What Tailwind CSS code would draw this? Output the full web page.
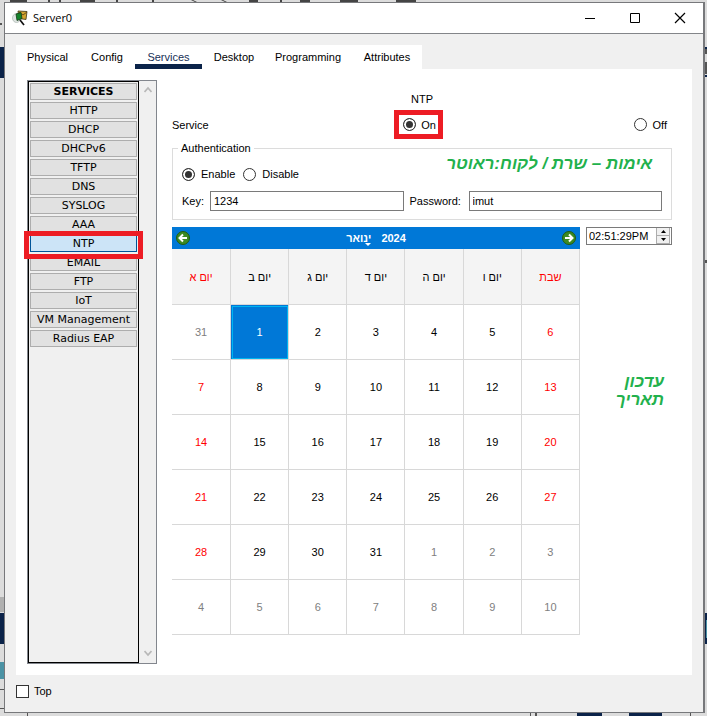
<!DOCTYPE html>
<html lang="en">
  <head>
    <meta charset="UTF-8" />
    <meta name="viewport" content="width=device-width, initial-scale=1.0" />
    <title>Server0</title>
    <script src="https://cdn.jsdelivr.net/npm/@tailwindcss/browser@4"></script>
  </head>
  <body class="relative h-screen overflow-hidden bg-[#dcdcdc] pt-0.5 pr-0.5 pb-[3px] pl-1 font-['Liberation_Sans',Arial,sans-serif] text-[11px] leading-4 text-black">
    <!-- what shows of the desktop round the window -->
    <svg class="absolute inset-0 size-full" aria-hidden="true">
      <path fill="#444" d="M10 0h17v2H10zM48 0h2v2h-2zM59 0h2v2h-2zM80 0h15v2H80zM116 0h2v2h-2zM152 0h2v2h-2zM191 0l4 2h2l-4-2zM221 0l4 2h2l-4-2zM249 0h9v2h-9zM280 0h2v2h-2zM300 0h10v2h-10zM340 0h18v2h-18zM396 0h20v2h-20z" />
      <path fill="#0b2349" d="M0 47h4v31H0zM0 613h4v31H0zM705 47h2v2h-2zM705 75h2v2h-2zM705 613h2v31h-2zM577 713h25v3h-25zM629 713h33v3h-33z" />
      <path fill="#555" d="M0 23h2v2H0zM705 49h2v5h-2zM705 62h2v12h-2zM705 260h2v3h-2zM0 689h4v1H0zM0 708h4v1H0zM27 713h1v3h-1zM530 713h1v3h-1zM535 713h2v3h-2zM690 713h1v3h-1z" />
      <path fill="#b0b0b0" d="M0 597h4v15H0z" />
      <path fill="#4b93a5" d="M0 662h4v17H0zM706 620h1v18h-1z" />
    </svg>

    <div class="relative flex h-full flex-col border border-r-2 border-[#77787b] bg-[#f0f0f0]">
      <header class="flex h-[31px] shrink-0 items-center border-b border-[#838589] bg-white pl-[7px]">
        <svg class="size-4" viewBox="0 0 16 16" aria-hidden="true">
          <ellipse cx="4.500" cy="8" rx="4" ry="4.500" fill="#dfe5e2" stroke="#aab5b0" stroke-width=".7" />
          <path fill="#d2a32f" stroke="#3b3316" stroke-width=".8" d="M6 1l9 .5-1 8-7-1z" />
          <path fill="none" stroke="#6b511a" d="M7 2l4 3 4-3" />
          <path fill="#14832a" stroke="#153a18" stroke-width=".8" d="M4 4l5-1.500 1 6-5 2z" />
          <path stroke="#111" stroke-width="1.700" d="M8 10l4 5" />
        </svg>
        <h1 class="ml-[5px] font-['Open_Sans',sans-serif]">Server0</h1>
        <div class="ml-auto flex h-full">
          <button class="grid w-[46px] place-items-center" aria-label="Minimize">
            <svg class="size-3" viewBox="0 0 12 12"><path stroke="#000" d="M1 6.500h10" /></svg>
          </button>
          <button class="grid w-[44px] place-items-center" aria-label="Maximize">
            <svg class="size-3" viewBox="0 0 12 12"><path fill="none" stroke="#000" d="M1.500 1.500h9v9h-9z" /></svg>
          </button>
          <button class="grid w-[46px] place-items-center" aria-label="Close">
            <svg class="size-3" viewBox="0 0 12 12"><path stroke="#000" stroke-width="1.200" d="M1 1l10 10M11 1L1 11" /></svg>
          </button>
        </div>
      </header>

      <div class="flex min-h-0 flex-1 flex-col px-[11px] pt-[11px]">
        <nav class="flex h-6 w-fit gap-[2px] bg-white">
          <a href="#" class="w-[63px] pt-1 text-center">Physical</a>
          <a href="#" class="w-[52px] pt-1 text-center">Config</a>
          <a href="#" class="w-[67px] border-b-5 border-[#0b2349] pt-1 text-center text-[#173057]">Services</a>
          <a href="#" class="w-[60px] pt-1 text-center">Desktop</a>
          <a href="#" class="w-[84px] pt-1 text-center">Programming</a>
          <a href="#" class="w-[70px] pt-1 text-center">Attributes</a>
        </nav>

        <main class="flex min-h-0 flex-1 gap-[15px] bg-white pt-[11px] pr-5 pb-[11px] pl-[11px]">
          <aside class="flex w-[130px] shrink-0 border border-[#82868d] bg-[#f0f0f0]">
            <div class="relative flex flex-1 flex-col gap-0.5 border border-black p-px font-['DejaVu_Sans',Verdana,sans-serif] [&>button]:h-[17px] [&>button]:border [&>button]:border-[#adadad] [&>button]:bg-[#e1e1e1] [&>button]:leading-4">
              <button class="font-bold">SERVICES</button>
              <button>HTTP</button>
              <button>DHCP</button>
              <button>DHCPv6</button>
              <button>TFTP</button>
              <button>DNS</button>
              <button>SYSLOG</button>
              <button>AAA</button>
              <button class="border-[#005499]! bg-[#cce4f7]!">NTP</button>
              <button>EMAIL</button>
              <button>FTP</button>
              <button>IoT</button>
              <button>VM Management</button>
              <button>Radius EAP</button>
              <span class="absolute -inset-x-[5px] top-[149px] h-7 border-5 border-[#ed1c24]"></span>
            </div>
            <div class="flex w-[17px] flex-col items-center justify-between py-1">
              <svg class="h-[10px] w-2" viewBox="0 0 8 10"><path fill="none" stroke="#b8b8b8" stroke-width="1.700" d="M0.500 7L4 3l3.500 4" /></svg>
              <svg class="h-[10px] w-2" viewBox="0 0 8 10"><path fill="none" stroke="#b8b8b8" stroke-width="1.700" d="M0.500 2L4 6l3.500-4" /></svg>
            </div>
          </aside>

          <section class="min-w-0 flex-1 pt-[11px]">
            <h2 class="text-center">NTP</h2>
            <div class="mt-[3px] flex h-[29px] items-center justify-between">
              <span class="w-[222px]">Service</span>
              <label class="flex h-full items-center gap-[5px] border-5 border-[#ed1c24] pr-0.5 pl-1">
                <input type="radio" name="service" checked class="size-[13px] appearance-none rounded-full border border-[#333] bg-white checked:bg-[#333] checked:shadow-[inset_0_0_0_2px_white]" />
                On
              </label>
              <span class="flex w-[229px] justify-end pr-[5px]">
                <label class="flex items-center gap-1.5">
                  <input type="radio" name="service" class="size-[13px] appearance-none rounded-full border border-[#333] bg-white checked:bg-[#333] checked:shadow-[inset_0_0_0_2px_white]" />
                  Off
                </label>
              </span>
            </div>

            <fieldset class="relative mt-px h-[80px] border border-[#dcdcdc] px-[9px] pb-2">
              <legend class="-ml-1 px-[3px]">Authentication</legend>
              <div class="mt-[10px] flex items-center gap-2">
                <label class="flex items-center gap-1.5">
                  <input type="radio" name="auth" checked class="size-[13px] appearance-none rounded-full border border-[#333] bg-white checked:bg-[#333] checked:shadow-[inset_0_0_0_2px_white]" />
                  Enable
                </label>
                <label class="flex items-center gap-1.5">
                  <input type="radio" name="auth" class="size-[13px] appearance-none rounded-full border border-[#333] bg-white checked:bg-[#333] checked:shadow-[inset_0_0_0_2px_white]" />
                  Disable
                </label>
              </div>
              <div class="mt-[9px] flex items-center">
                <label for="key" class="w-7">Key:</label>
                <input id="key" type="text" value="1234" class="h-5 min-w-0 flex-1 border border-[#7a7a7a] bg-white px-[3px]" />
                <label for="password" class="ml-1.5 w-[59px]">Password:</label>
                <input id="password" type="text" value="imut" class="h-5 min-w-0 flex-1 border border-[#7a7a7a] bg-white px-[3px]" />
              </div>
              <p dir="rtl" lang="he" class="absolute -top-1 right-[19px] text-[17px] leading-6 font-bold text-[#22b14c] italic">אימות – שרת / לקוח:ראוטר</p>
            </fieldset>

            <div class="mt-[7px] flex gap-1.5">
              <div class="min-w-0 flex-1">
                <div class="flex h-[22px] items-center justify-between bg-[#0078d7] px-1 font-bold text-white">
                  <button aria-label="Previous month">
                    <svg class="size-[14px]" viewBox="0 0 14 14"><circle cx="7" cy="7" r="6.500" fill="#3c8a22" stroke="#225c14" /><path fill="none" stroke="#fff" stroke-width="2" d="M11 7H4M7 3.500L3.500 7 7 10.500" /></svg>
                  </button>
                  <div class="flex items-center gap-[10px]">
                    <button lang="he" class="relative">ינואר<span class="absolute right-0 bottom-0 border-x-3 border-t-3 border-x-transparent border-t-white"></span></button>
                    <button>2024</button>
                  </div>
                  <button aria-label="Next month">
                    <svg class="size-[14px]" viewBox="0 0 14 14"><circle cx="7" cy="7" r="6.500" fill="#3c8a22" stroke="#225c14" /><path fill="none" stroke="#fff" stroke-width="2" d="M3 7h7M7 3.500L10.500 7 7 10.500" /></svg>
                  </button>
                </div>
                <table class="w-full table-fixed border-separate border-spacing-0 text-center [&_td]:h-[55px] [&_td]:border-r [&_td]:border-b [&_td]:border-[#d8d8d8] [&_th]:h-[56px] [&_th]:border-r [&_th]:border-b [&_th]:border-[#d8d8d8] [&_th]:bg-[#f4f4f4] [&_th]:font-normal">
                  <thead lang="he">
                    <tr><th class="w-[59px] text-[#ff0000]">יום א</th><th>יום ב</th><th>יום ג</th><th>יום ד</th><th>יום ה</th><th>יום ו</th><th class="text-[#ff0000]">שבת</th></tr>
                  </thead>
                  <tbody>
                    <tr><td class="text-[#808080]">31</td><td class="bg-[#0078d7] text-white outline-1 -outline-offset-2 outline-[#00b4f0]">1</td><td>2</td><td>3</td><td>4</td><td>5</td><td class="text-[#ff0000]">6</td></tr>
                    <tr><td class="text-[#ff0000]">7</td><td>8</td><td>9</td><td>10</td><td>11</td><td>12</td><td class="text-[#ff0000]">13</td></tr>
                    <tr><td class="text-[#ff0000]">14</td><td>15</td><td>16</td><td>17</td><td>18</td><td>19</td><td class="text-[#ff0000]">20</td></tr>
                    <tr><td class="text-[#ff0000]">21</td><td>22</td><td>23</td><td>24</td><td>25</td><td>26</td><td class="text-[#ff0000]">27</td></tr>
                    <tr><td class="text-[#ff0000]">28</td><td>29</td><td>30</td><td>31</td><td class="text-[#808080]">1</td><td class="text-[#808080]">2</td><td class="text-[#808080]">3</td></tr>
                    <tr class="text-[#808080]"><td>4</td><td>5</td><td>6</td><td>7</td><td>8</td><td>9</td><td>10</td></tr>
                  </tbody>
                </table>
              </div>

              <div class="w-[86px] shrink-0">
                <div class="flex h-[18px] border border-[#7a7a7a] bg-white">
                  <input type="text" value="02:51:29PM" aria-label="Time" class="min-w-0 flex-1 pl-0.5" />
                  <div class="mr-px flex w-[14px] flex-col border-x border-[#adadad] bg-[#f0f0f0]">
                    <button class="grid flex-1 place-items-center border-b border-[#adadad]" aria-label="Later"><svg class="h-[3px] w-[5px]" viewBox="0 0 5 3"><path d="M0 3l2.500-3L5 3z" /></svg></button>
                    <button class="grid flex-1 place-items-center border-b border-[#adadad]" aria-label="Earlier"><svg class="h-[3px] w-[5px]" viewBox="0 0 5 3"><path d="M0 0l2.500 3L5 0z" /></svg></button>
                  </div>
                </div>
                <p dir="rtl" lang="he" class="mt-[128px] pr-2 text-[17px] leading-[18px] font-bold text-[#22b14c] italic">עדכון<br />תאריך</p>
              </div>
            </div>
          </section>
        </main>

        <footer class="flex h-[37px] shrink-0 items-start pt-2">
          <label class="flex items-center gap-[5px]">
            <input type="checkbox" class="size-[13px] appearance-none border border-[#333] bg-white checked:bg-[#333]" />
            Top
          </label>
        </footer>
      </div>
    </div>
  </body>
</html>
